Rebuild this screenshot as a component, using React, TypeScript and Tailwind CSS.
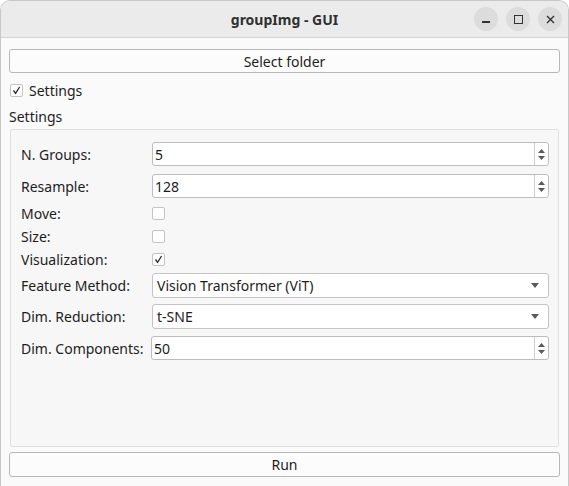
import React from "react";

const font = { fontFamily: '"Noto Sans", "DejaVu Sans", sans-serif' };

function Check({ checked }: { checked?: boolean }) {
  return (
    <div className="w-[13px] h-[13px] border border-[#c4c4c4] bg-white rounded-[2px] flex items-center justify-center shrink-0">
      {checked && (
        <svg width="9" height="9" viewBox="0 0 9 9">
          <path d="M1.5 4.5 L3.6 7.4 L7.6 1" fill="none" stroke="#2a2a2a" strokeWidth="1.3" />
        </svg>
      )}
    </div>
  );
}

function Spin({ value }: { value: string }) {
  return (
    <div className="flex-1 h-[24px] flex border border-[#bdbdbd] rounded-[3px] bg-white">
      <div className="flex-1 flex items-center pl-[2px] text-[14px] text-[#1d1d1d]">{value}</div>
      <div className="w-[14px] border-l border-[#cfcfcf] flex flex-col items-center justify-center gap-[3px]">
        <svg width="7" height="4" viewBox="0 0 7 4"><path d="M0 4 L3.5 0 L7 4 Z" fill="#5a5a5a" /></svg>
        <svg width="7" height="4" viewBox="0 0 7 4"><path d="M0 0 L3.5 4 L7 0 Z" fill="#5a5a5a" /></svg>
      </div>
    </div>
  );
}

function Combo({ value }: { value: string }) {
  return (
    <div className="flex-1 h-[25px] flex items-center border border-[#c4c4c4] rounded-[3px] bg-white pl-[4px] pr-[9px]">
      <div className="flex-1 text-[14px] text-[#1d1d1d]">{value}</div>
      <svg width="8" height="5" viewBox="0 0 8 5"><path d="M0 0 L4 5 L8 0 Z" fill="#5a5a5a" /></svg>
    </div>
  );
}

function Label({ children }: { children: React.ReactNode }) {
  return <div className="w-[131px] shrink-0 text-[14px] text-[#1d1d1d] whitespace-nowrap">{children}</div>;
}

export default function App() {
  return (
    <div style={font} className="w-[569px] h-[486px] bg-white">
      <div className="w-[569px] h-[486px] flex flex-col bg-[#fafafa] rounded-t-[10px] border-t border-l border-r border-[#c8c8c8] overflow-hidden">
        <div className="h-[37px] shrink-0 bg-[#ebebeb] border-b border-[#d3d3d3] relative flex items-center justify-center">
          <div className="text-[14px] font-bold text-[#303030]">groupImg - GUI</div>
          <div className="absolute right-[6px] top-[6px] flex gap-[8px]">
            <div className="w-[24px] h-[24px] rounded-full bg-[#dcdcdc] flex items-center justify-center">
              <div className="w-[8px] h-[1.5px] bg-[#333] mt-[6px]" />
            </div>
            <div className="w-[24px] h-[24px] rounded-full bg-[#dcdcdc] flex items-center justify-center">
              <div className="w-[9px] h-[9px] border-[1.5px] border-[#333]" />
            </div>
            <div className="w-[24px] h-[24px] rounded-full bg-[#dcdcdc] flex items-center justify-center">
              <svg width="9" height="9" viewBox="0 0 9 9"><path d="M1 1 L8 8 M8 1 L1 8" stroke="#333" strokeWidth="1.4" /></svg>
            </div>
          </div>
        </div>

        <div className="flex-1 flex flex-col px-[8px] pt-[11px]">
          <div className="h-[24px] border border-[#b8b8b8] rounded-[3px] bg-[#fcfcfc] flex items-center justify-center text-[14px] text-[#1d1d1d]">
            Select folder
          </div>
          <div className="flex items-center gap-[6px] mt-[10px] pl-[1px] h-[14px]">
            <Check checked />
            <span className="text-[14px] text-[#1d1d1d]">Settings</span>
          </div>
          <div className="text-[14px] text-[#1d1d1d] mt-[11px] leading-[18px]">Settings</div>
          <div className="mt-[3px] ml-[1px] mr-[1px] h-[318px] border border-[#e0e0e0] rounded-[2px] bg-[#f7f7f7] pl-[10px] pr-[9px] pt-[12px] flex flex-col">
            <div className="flex items-center h-[24px]">
              <Label>N. Groups:</Label>
              <Spin value="5" />
            </div>
            <div className="flex items-center h-[24px] mt-[8px]">
              <Label>Resample:</Label>
              <Spin value="128" />
            </div>
            <div className="flex items-center h-[15px] mt-[8px]">
              <Label>Move:</Label>
              <Check />
            </div>
            <div className="flex items-center h-[15px] mt-[8px]">
              <Label>Size:</Label>
              <Check />
            </div>
            <div className="flex items-center h-[15px] mt-[8px]">
              <Label>Visualization:</Label>
              <Check checked />
            </div>
            <div className="flex items-center h-[25px] mt-[6px]">
              <Label>Feature Method:</Label>
              <Combo value="Vision Transformer (ViT)" />
            </div>
            <div className="flex items-center h-[25px] mt-[6px]">
              <Label>Dim. Reduction:</Label>
              <Combo value="t-SNE" />
            </div>
            <div className="flex items-center h-[24px] mt-[7px]">
              <div className="w-[130px] shrink-0 text-[14px] text-[#1d1d1d] whitespace-nowrap">Dim. Components:</div>
              <Spin value="50" />
            </div>
          </div>
          <div className="mt-[5px] h-[25px] border border-[#b8b8b8] rounded-[3px] bg-[#fcfcfc] flex items-center justify-center text-[14px] text-[#1d1d1d]">
            Run
          </div>
        </div>
      </div>
    </div>
  );
}
